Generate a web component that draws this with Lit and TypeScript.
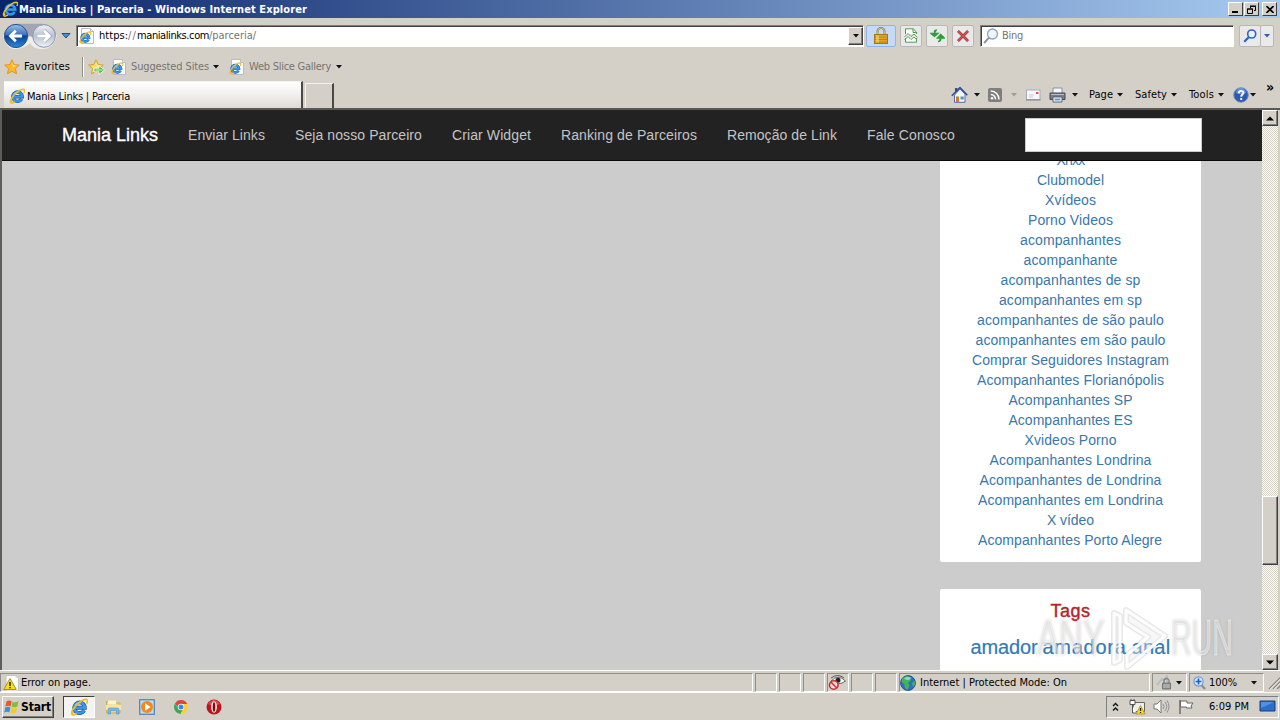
import { LitElement, html, css, svg, nothing } from "lit";
import { customElement } from "lit/decorators.js";
import { styleMap } from "lit/directives/style-map.js";

const UI = '"DejaVu Sans Condensed","DejaVu Sans",sans-serif';
const WEB = '"Liberation Sans",Arial,sans-serif';
const ctx = document.createElement("canvas").getContext("2d")!;

// Tracks a label so that it fills exactly the given width.
function label(text: string, width: number, cls = "ui", font = `11px ${UI}`) {
  ctx.font = font;
  const spacing = (width - ctx.measureText(text).width) / text.length;
  return html`<span class="t ${cls}" style=${styleMap({ width: width + "px", letterSpacing: spacing.toFixed(3) + "px" })}>${text}</span>`;
}
const web = (text: string, width: number, cls = "link", px = 14) => label(text, width, cls, `${px}px ${WEB}`);
const gap = (w: number) => html`<i class="gap" style=${styleMap({ width: w + "px" })}></i>`;
const icon = (w: number, h: number, body: unknown, cls = "") =>
  html`<svg class="ic ${cls}" width=${w} height=${h} viewBox="0 0 ${w} ${h}">${body}</svg>`;
const caret = (cls = "") => icon(6, 4, svg`<path d="M0 0h6L3 3.6z" fill=${cls ? "#a09d98" : "#111"}/>`);

const eGlyph = svg`
  <path d="M12.600 11A4.700 4.700 0 1 1 13.200 8.700H5" fill="none" stroke="#1553a4" stroke-width="3.400"/>
  <path d="M12.600 11A4.700 4.700 0 1 1 13.200 8.700H5" fill="none" stroke="#3b97e8" stroke-width="2.300"/>
  <path d="M4.600 6.500Q6.500 3.800 9.500 4" stroke="#a6e0fb" fill="none" stroke-width="1"/>
  <path d="M3.200 12.500C.8 15.500 2.500 16 6 13.800M2 14.800C-.5 12.500 8.500 1.600 14 1.200c2.200 0 1.700 2.200.9 3.800" stroke="#f2be25" stroke-width="1.500" fill="none"/>`;
const ie = () => icon(16, 16, eGlyph);
const ieBig = () => icon(18, 18, svg`<g transform="scale(1.120)">${eGlyph}</g>`);
const iePage = () => icon(16, 16, svg`<path d="M2.500 .5h9l3 3v12h-12z" fill="#fff" stroke="#b5bcc8"/><path d="M11.500.5v3h3" fill="#dde4ee" stroke="#b5bcc8"/><g transform="translate(-.3 3) scale(.78)">${eGlyph}</g>`);
const starPath = "M8 .8l2.200 4.700 5.100.6-3.800 3.500 1 5.200L8 12.300l-4.500 2.500 1-5.200L.7 6.100l5.100-.6z";
const star = (add = false) => icon(17, 16, svg`
  <path d=${starPath} fill=${add ? "#fbdc66" : "#fbb92a"} stroke=${add ? "#cf9a22" : "#e0921c"} stroke-width=".9"/>
  <path d="M8 2.800 9.300 6.200 12.500 6.800 9 8z" fill="#fff0a8"/>
  ${add ? svg`<path d="M6 9.200h5V6.500l5.500 4.500-5.500 4.500v-2.700H6z" fill="#4cc043" stroke="#fff" stroke-width=".8"/><path d="M7.500 11h7" stroke="#d8f5cc"/>` : nothing}`);

const back = icon(60, 26, svg`
  <defs>
    <linearGradient id="b" x1="0" y1="0" x2="0" y2="1"><stop offset="0" stop-color="#9cbfe8"/><stop offset=".45" stop-color="#3a72be"/><stop offset=".5" stop-color="#0c3f92"/><stop offset="1" stop-color="#2c8cdf"/></linearGradient>
    <linearGradient id="f" x1="0" y1="0" x2="0" y2="1"><stop offset="0" stop-color="#eef1f6"/><stop offset=".5" stop-color="#b9c2d2"/><stop offset="1" stop-color="#eef2f8"/></linearGradient>
  </defs>
  <path d="M2 12Q5 27 15 26T29 20Q33 27 43 26T56 12z" fill="#efeeec"/>
  <path d="M6 4Q12 0 18 .8H41Q55 2 55 13L43 20 29 13 15 20z" fill="#a3a5b4"/>
  <circle cx="15" cy="13" r="11.600" fill="url(#b)" stroke="#2a4f8c"/>
  <path d="M21 13H10M14.800 7.700 9.500 13l5.300 5.300" stroke="#fff" stroke-width="2.800" fill="none"/>
  <circle cx="43" cy="13" r="11.300" fill="url(#f)" stroke="#8e99ad"/>
  <path d="M36.500 13h11M43 7.700l5.300 5.300-5.300 5.300" stroke="#97a2b5" stroke-width="4" fill="none"/>
  <path d="M36.500 13h11M43 7.700l5.300 5.300-5.300 5.300" stroke="#fff" stroke-width="2.800" fill="none"/>`);

const lock = icon(14, 17, svg`<path d="M3.500 9V4.500a3.500 3.500 0 0 1 7 0V9" fill="none" stroke="#8c7a3c" stroke-width="2"/><path d="M3.500 8V4.500a3.500 3.500 0 0 1 7 0V8" fill="none" stroke="#e5d9a8" stroke-width=".7"/><rect x=".5" y="7.500" width="13" height="9" fill="#e2a720" stroke="#a87512"/><path d="M1 10h12M1 12.500h12M1 15h12" stroke="#b9851a"/><path d="M2 8.500h3v7H2z" fill="#fbd977" opacity=".6"/>`);
const compat = icon(14, 15, svg`<path d="M1.500 6V.8h7.700l3.300 3.300V6M1.500 10v4.200h11V10" fill="#fff" stroke="#4d9a4d"/><path d="M9 1v3.500h3.500" fill="none" stroke="#4d9a4d"/><path d="M.5 9 4 5.500l3 3 3-2.500 3.500 3.500M.5 12 4 8.500l3 3 3-2.500 3 3" stroke="#54a654" fill="none"/>`);
const refresh = icon(15, 14, svg`<path d="M4.500 7.500 1 4.500h7zM4.500 5V2Q5 1 7 1.200" fill="#2e9c38" stroke="#2e9c38" stroke-width="1.300"/><path d="M10.700 5.500 7.300 9h7zM10.700 8v3Q10 12.800 8 12.700" fill="#2e9c38" stroke="#2e9c38" stroke-width="1.300"/>`);
const stop = icon(12, 12, svg`<path d="M1 1l10 10M11 1 1 11" stroke="#8c3434" stroke-width="2.600"/><path d="M1 1l10 10M11 1 1 11" stroke="#e04c4c" stroke-width="1.600"/>`);
const mag = (c: string) => icon(14, 14, svg`<circle cx="8.700" cy="5" r="4" fill="#e9f2fc" stroke=${c} stroke-width="1.600"/><path d="M5.700 8.200 1.200 12.800" stroke=${c} stroke-width="2.200"/>`);
const magBig = icon(16, 16, svg`<circle cx="9.500" cy="6" r="5" fill="#eef5fc" stroke="#8fa3bd" stroke-width="1.300"/><path d="M6 9.700 1.200 15" stroke="#8d949e" stroke-width="2"/>`);

const home = icon(17, 17, svg`<path d="M4 2h2.500v4H4z" fill="#3350a0"/><path d="M3.500 9v7.300h10.500V8L9 3z" fill="#f4f6fb" stroke="#556ca0"/><path d="M.8 9.700 9 1.500l7.300 7.700" fill="none" stroke="#2d4d95" stroke-width="1.500"/><path d="M5 10.500h3v5.500H5z" fill="#c7822d"/><path d="M9.500 10.500h3.200v3H9.500z" fill="#4797d8"/>`);
const rss = icon(14, 14, svg`<rect width="14" height="14" rx="2" fill="#7e7e7e"/><circle cx="4" cy="10.300" r="1.300" fill="#fff"/><path d="M2.800 6.500a4.700 4.700 0 0 1 4.700 4.900M2.800 3a8.300 8.300 0 0 1 8.200 8.400" fill="none" stroke="#fff" stroke-width="1.500"/>`);
const mail = icon(15, 12, svg`<rect x=".5" y="1" width="13.500" height="9.500" fill="#f7f8fb" stroke="#a9acb5"/><path d="M0 11h14.500" stroke="#7e828b"/><path d="M10 3h2.500v2H10z" fill="#d05a55"/><path d="M3 6h5M3 8h4" stroke="#c9ccd6"/>`);
const printer = icon(17, 16, svg`<path d="M4 1h9v6H4z" fill="#f5f8fc" stroke="#8a9099"/><path d="M1 6h15v6.500H1z" fill="#777d87" stroke="#444a54"/><path d="M2 7.500h13" stroke="#b8bec8"/><path d="M4 10h9v5H4z" fill="#fff" stroke="#59606b"/><path d="M5.500 11.500h6v2h-6z" fill="#5f99d0"/>`);
const help = icon(16, 16, svg`<circle cx="8" cy="8" r="7.300" fill="#2b59b4" stroke="#7c93bd"/><path d="M3 6a5 5 0 0 1 10 0q-5 2.500-10 0z" fill="#80a8e4" opacity=".7"/><path d="M5.800 6.200C5.800 3 10.600 3.300 10.400 6 10.300 7.600 8.200 7.500 8.200 9.700M8.200 11v2" fill="none" stroke="#fff" stroke-width="1.900"/>`);

const warn = icon(16, 16, svg`<path d="M3 .5h9l3.500 3V16H3z" fill="#fff" stroke="#c3c3c3"/><path d="M7 3.500 13.300 14.500H.7z" fill="#f8dd1c" stroke="#a8901a"/><path d="M7 7v4M7 12v1.300" stroke="#222" stroke-width="1.500"/>`);
const eye = icon(20, 17, svg`<path d="M3 7Q10-.5 17.500 7 10.500 12.500 3 7z" fill="#fff" stroke="#666"/><path d="M3 4Q10-1 16 4" stroke="#555" fill="none"/><circle cx="10" cy="6.300" r="2.500" fill="#222"/><circle cx="5.800" cy="11" r="4.300" fill="#f6dcdc" stroke="#c43434" stroke-width="1.600"/><path d="M2.800 8l6 6" stroke="#c43434" stroke-width="1.600"/>`);
const globe = icon(16, 16, svg`<circle cx="8" cy="8" r="7.400" fill="#2a71c4" stroke="#27508e"/><path d="M2 4Q5 0 9 1.500L11 5 8 8 9.500 10 7.500 15Q4 13 4.500 9L1.500 7zM12 8l3-2q.5 4-2 6z" fill="#43b653"/><path d="M4 3.500Q8 1 11.500 3 8 6.500 4 3.500z" fill="#bfe8f4" opacity=".7"/>`);
const privacy = icon(16, 15, svg`<path d="M1 10 6 4l2 2 3-5v6" stroke="#b9bbbf" stroke-width="2" fill="#d9dade"/><path d="M8 8V6a2.500 2.500 0 0 1 5 0v2" fill="none" stroke="#858585" stroke-width="1.400"/><path d="M6.500 8h8v6h-8z" fill="#8f8f8f" stroke="#757575"/><path d="M7 10h7M7 12h7" stroke="#c5c5c5"/>`);
const zoomIc = icon(13, 14, svg`<path d="M8 8.500l4 4.500" stroke="#8a8f98" stroke-width="2.200"/><circle cx="5.500" cy="5.500" r="4.600" fill="#dcebfb" stroke="#6f9bd2" stroke-width="1.200"/><path d="M5.500 2.500v6M2.500 5.500h6" stroke="#1d62c0" stroke-width="1.700"/>`);
const grip = icon(13, 13, svg`<path d="M1 13 13 1M5 13l8-8M9 13l4-4" stroke="#86837d" stroke-width="1.400"/><path d="M2.300 13 13 2.300M6.300 13 13 6.300" stroke="#fff" stroke-width=".8"/>`);

const flag = icon(16, 16, svg`<path d="M2.500 2.500Q5 .8 7.600 2.300L6.600 7.400Q4 6 1.400 7.500z" fill="#e8582a"/><path d="M8.600 2.700Q11 4 14.500 2.300L13.400 7.400Q10.500 9 7.600 7.800z" fill="#7fbe3e"/><path d="M1.200 8.500Q4 7 6.400 8.400L5.300 13.500Q3 12 .2 13.500z" fill="#3f8fdc"/><path d="M7.400 8.800Q10 10.200 13.200 8.500L12.100 13.500Q9 15 6.300 13.900z" fill="#f8c832"/>`);
const folder = icon(17, 16, svg`<path d="M1.500 2.500h5l1.500 1.500h7v10h-13.500z" fill="#f0d477" stroke="#d2b048"/><path d="M3 1.500h8v4H3z" fill="#fbf3cc"/><path d="M1 6h15v5H1z" fill="#fae79a"/><path d="M3 15V10.500q0-1.500 1.500-1.500h8q1.500 0 1.500 1.500V15h-2.500v-3.500h-6V15z" fill="#74b9ea" stroke="#4a92cf" stroke-width=".6"/>`);
const player = icon(16, 16, svg`<rect x=".7" y=".7" width="14.600" height="14.600" fill="#b9dcf4" stroke="#4c82bb" stroke-width="1.200"/><circle cx="8" cy="8" r="6" fill="#f18a1c"/><path d="M6 4.300 11.500 8 6 11.700z" fill="#fff"/>`);
const chrome = icon(14, 14, svg`<path d="M1 3.500A7 7 0 0 1 13.300 4H7a3 3 0 0 0-3 3z" fill="#df4635"/><path d="M1 3.500A7 7 0 0 0 6.500 14L9.500 8.500 4.400 8.500z" fill="#3da658"/><path d="M13.300 4A7 7 0 0 1 6.500 14L9.700 8.500V4z" fill="#fbcf35"/><circle cx="7" cy="7" r="3.200" fill="#fff"/><circle cx="7" cy="7" r="2.500" fill="#4384ec"/>`);
const opera = icon(16, 16, svg`<circle cx="8" cy="8" r="7.500" fill="#b7171d"/><path d="M2 5Q8-3 14 5 8 8 2 5z" fill="#e36464" opacity=".7"/><ellipse cx="8" cy="8" rx="2.900" ry="5.800" fill="#f7eaea"/><ellipse cx="8" cy="8" rx="1.300" ry="4.800" fill="#7c0a10"/>`);
const chev = icon(7, 10, svg`<path d="M1 4l2.500-2.500L6 4M1 8.500 3.500 6 6 8.500" fill="none" stroke="#111" stroke-width="1.400"/>`);
const net = icon(17, 16, svg`<path d="M4.500 3.500h11v9h-11z" fill="#eee" stroke="#666"/><path d="M1 1.500h5v4H1zM2 0v2M5 0v2M3.500 6v8h4" fill="#fff" stroke="#555"/><path d="M11.500 6.500 16 15H7z" fill="#f8dd1c" stroke="#a8901a" stroke-width=".8"/><path d="M11.500 9v3M11.500 13v1" stroke="#222" stroke-width="1.300"/>`);
const sound = icon(17, 15, svg`<path d="M1 5h3l4-4v13l-4-4H1z" fill="#fff" stroke="#777"/><path d="M10 5q2 2.500 0 5M12 3q3.500 4.500 0 9M14 1.500q4 6 0 12" fill="none" stroke="#8f8f8f"/>`);
const action = icon(16, 15, svg`<path d="M2 1v14" stroke="#666" stroke-width="1.400"/><path d="M2.500 2h6.500v2h6l-2 3 1 2H8.500V8h-6z" fill="#fff" stroke="#666"/>`);
const monitor = icon(17, 14, svg`<path d="M1 1h15v10H1z" fill="#2c6fc8" stroke="#173c7c"/><path d="M2 2h13L2 8z" fill="#6fa8e8" opacity=".6"/><path d="M4 13h9" stroke="#cfd3da" stroke-width="1.500"/>`);

const links: [string, number][] = [
  ["Xnxx", 28], ["Clubmodel", 67], ["Xvídeos", 51], ["Porno Videos", 85], ["acompanhantes", 101], ["acompanhante", 94],
  ["acompanhantes de sp", 140], ["acompanhantes em sp", 143], ["acompanhantes de são paulo", 187],
  ["acompanhantes em são paulo", 190], ["Comprar Seguidores Instagram", 197], ["Acompanhantes Florianópolis", 187],
  ["Acompanhantes SP", 124], ["Acompanhantes ES", 124], ["Xvideos Porno", 92], ["Acompanhantes Londrina", 162],
  ["Acompanhantes de Londrina", 182], ["Acompanhantes em Londrina", 185], ["X vídeo", 47], ["Acompanhantes Porto Alegre", 185],
];
const nav: [string, number][] = [
  ["Enviar Links", 77], ["Seja nosso Parceiro", 127], ["Criar Widget", 79], ["Ranking de Parceiros", 136], ["Remoção de Link", 110], ["Fale Conosco", 88],
];

@customElement("app-root")
export class AppRoot extends LitElement {
  static styles = css`
    :host { display: flex; flex-direction: column; width: 1280px; height: 720px; overflow: hidden; background: #d4d0c8; font: 11px "DejaVu Sans Condensed", "DejaVu Sans", sans-serif; color: #000; }
    * { box-sizing: border-box; }
    .row { display: flex; align-items: center; flex: none; }
    .gap, .ic { flex: none; display: block; }
    .t { white-space: pre; flex: none; display: block; }
    .grey { color: #77746f; }
    .title { height: 18px; padding-left: 2px; background: linear-gradient(90deg, #0a246a, #a6caf0); }
    .cap { font-weight: bold; color: #fff; }
    .winbtn { width: 15px; height: 14px; flex: none; background: #d4d0c8; border: 1px solid; border-color: #fff #404040 #404040 #fff; display: flex; align-items: center; justify-content: center; }
    .address { height: 36px; padding: 0 0 1px 1px; }
    .field { height: 22px; background: #fff; border: 1px solid; border-color: #808080 #fff #fff #808080; box-shadow: inset 1px 1px #404040; display: flex; align-items: center; flex: none; }
    .url { width: 788px; padding-left: 2px; }
    .drop { width: 15px; height: 18px; margin: 1px 0 0 0; background: #d4d0c8; border: 1px solid; border-color: #fff #404040 #404040 #fff; box-shadow: inset -1px -1px #808080; display: flex; align-items: center; justify-content: center; flex: none; }
    .btn { width: 22px; height: 22px; flex: none; border: 1px solid #b9b7b8; border-radius: 2px; background: #e9e9ea; display: flex; align-items: center; justify-content: center; }
    .secure { width: 30px; background: #c4daf8; border-color: #93b4e3; }
    .narrow { width: 14px; margin-left: -1px; }
    .search { width: 254px; padding-left: 2px; }
    .favs { height: 25px; padding-left: 4px; }
    .sep { width: 2px; height: 20px; background: linear-gradient(90deg, #8f8c86 50%, #fff 50%); flex: none; }
    .tabs { height: 29px; padding-left: 4px; align-items: flex-end; }
    .tab { width: 299px; height: 27px; padding: 2px 0 0 5px; display: flex; align-items: center; background: linear-gradient(#fff, #f2f1ef 45%, #dedbd6); border-right: 2px solid #4a4844; border-top: 1px solid #f4f3f1; flex: none; }
    .newtab { width: 29px; height: 25px; margin-left: 2px; border: 1px solid #f4f3f1; border-right: 2px solid #4a4844; border-bottom: 0; flex: none; }
    .tools { display: flex; align-items: center; height: 27px; }
    .more { font-weight: bold; font-size: 14px; align-self: flex-start; line-height: 12px; }
    .view { display: flex; flex: none; height: 562px; border-top: 2px solid #5a5854; border-left: 2px solid #5f5d59; position: relative; }
    .page { width: 1260px; background: #ccc; display: flex; flex-direction: column; overflow: hidden; font-family: "Liberation Sans", Arial, sans-serif; font-size: 14px; }
    .nav { height: 51px; background: #222; border-bottom: 1px solid #080808; padding-left: 60px; flex: none; display: flex; align-items: center; gap: 30px; position: relative; z-index: 1; }
    .brand { font-size: 18px; color: #fff; -webkit-text-stroke: .35px #fff; }
    .navlink { color: #c4c4c4; }
    .q { width: 177px; height: 34px; background: #fff; border: 1px solid #ccc; margin-left: 40px; }
    .side { width: 261px; margin-left: 938px; display: flex; flex-direction: column; gap: 27px; }
    .card { background: #fff; display: flex; flex-direction: column; align-items: center; border-radius: 2px; }
    .first { margin-top: -11px; padding-bottom: 12px; }
    .link { color: #3a77ab; line-height: 20px; height: 20px; }
    .tagsbox { height: 90px; padding-top: 11px; }
    .tagh { font-size: 18px; font-weight: normal; color: #b8202a; line-height: 22px; -webkit-text-stroke: .4px #b8202a; }
    .tags { display: flex; gap: 5px; margin-top: 12px; align-items: baseline; }
    .tag { color: #337ab7; font-size: 20px; line-height: 26px; -webkit-text-stroke: .2px #337ab7; }
    .bar { width: 16px; display: flex; flex-direction: column; background: repeating-conic-gradient(#fff 0 25%, #d4d0c8 0 50%) 0 0 / 2px 2px; flex: none; }
    .sb { width: 16px; height: 16px; background: #d4d0c8; border: 1px solid; border-color: #fff #404040 #404040 #fff; box-shadow: inset -1px -1px #808080; display: flex; align-items: center; justify-content: center; }
    .thumb { height: 69px; margin: 370px 0 89px; }
    .mark { position: absolute; left: 1035px; top: 496px; z-index: 2; display: flex; align-items: center; width: 200px; height: 64px; font-family: "Liberation Sans", Arial, sans-serif; pointer-events: none; }
    .wm { color: rgba(255, 255, 255, .5); -webkit-text-stroke: 1px rgba(255, 255, 255, .5); font-size: 50px; line-height: 58px; transform-origin: 0 50%; text-shadow: 0 0 3px rgba(90, 90, 90, .38); white-space: pre; }
    .any { width: 70px; transform: scaleX(.66); }
    .run { width: 64px; transform: scaleX(.57); }
    .status { height: 22px; border-top: 1px solid #fff; align-items: center; padding-top: 2px; }
    .pane { width: 22px; height: 19px; border: 1px solid; border-color: #908d87 #fff #fff #908d87; display: flex; align-items: center; flex: none; margin-right: 2px; }
    .message { width: 753px; }
    .zone { width: 251px; }
    .priv { width: 35px; }
    .zoom { width: 75px; }
    .task { height: 27px; border-top: 1px solid #fff; padding: 1px 1px 0 2px; }
    .start { width: 52px; height: 22px; background: #d4d0c8; border: 1px solid; border-color: #fff #404040 #404040 #fff; box-shadow: inset -1px -1px #808080; display: flex; align-items: center; padding-left: 1px; flex: none; }
    .bold { font-weight: bold; font-size: 12px; }
    .active { width: 32px; height: 22px; background: #f4f3f1; border: 1px solid; border-color: #404040 #fff #fff #404040; display: flex; align-items: center; justify-content: center; flex: none; }
    .tray { width: 173px; height: 22px; border: 1px solid; border-color: #808080 #fff #fff #808080; display: flex; align-items: center; padding-left: 5px; flex: none; }
  `;

  render() {
    const bold = (s: number) => `bold ${s}px ${UI}`;
    return html`
      <div class="row title">${ie()}${gap(1)}${label("Mania Links | Parceria - Windows Internet Explorer", 288, "cap", bold(11))}${gap(921)}
        <div class="winbtn">${icon(8, 8, svg`<path d="M0 6h6v2H0z"/>`)}</div>${gap(1)}
        <div class="winbtn">${icon(9, 9, svg`<path d="M3.500 3V1.500h5v4H7M3 1h6" fill="none" stroke="#000"/><path d="M.5 4h5v4.500h-5zM0 4h6" fill="none" stroke="#000"/>`)}</div>${gap(3)}
        <div class="winbtn">${icon(8, 7, svg`<path d="M.5 0l7 7M7.500 0l-7 7" stroke="#000" stroke-width="1.600"/>`)}</div>
      </div>
      <div class="row address">${back}${icon(10, 6, svg`<path d="M1 .5h8L5 5z" fill="#4d90d0" stroke="#1f4f8c"/>`)}${gap(5)}
        <div class="field url">${iePage()}${gap(4)}${label("https:", 29)}${label("//", 9, "grey")}${label("manialinks.com", 72)}${label("/parceria/", 47, "grey")}${gap(592)}<div class="drop">${caret()}</div></div>
        ${gap(2)}<div class="btn secure">${lock}</div>${gap(4)}<div class="btn">${compat}</div>${gap(4)}<div class="btn">${refresh}</div>${gap(4)}<div class="btn">${stop}</div>${gap(6)}
        <div class="field search">${magBig}${gap(3)}${label("Bing", 21, "grey")}</div>${gap(5)}
        <div class="btn">${mag("#2a62c4")}</div><div class="btn narrow">${icon(6, 4, svg`<path d="M0 0h6L3 3.600z" fill="#2f62ae"/>`)}</div>
      </div>
      <div class="row favs">${star()}${gap(3)}${label("Favorites", 46)}${gap(12)}<i class="sep"></i>${gap(4)}${star(true)}${gap(6)}${iePage()}${gap(4)}${label("Suggested Sites", 78, "grey")}${gap(4)}${caret()}${gap(10)}${iePage()}${gap(4)}${label("Web Slice Gallery", 82, "grey")}${gap(5)}${caret()}</div>
      <div class="row tabs">
        <div class="tab">${ie()}${gap(2)}${label("Mania Links | Parceria", 103)}</div><div class="newtab"></div>${gap(617)}
        <div class="tools">${home}${gap(6)}${caret()}${gap(8)}${rss}${gap(9)}${caret("off")}${gap(9)}${mail}${gap(8)}${printer}${gap(6)}${caret()}${gap(11)}${label("Page", 24)}${gap(4)}${caret()}${gap(12)}${label("Safety", 32)}${gap(4)}${caret()}${gap(12)}${label("Tools", 25)}${gap(4)}${caret()}${gap(9)}${help}${gap(1)}${caret()}${gap(10)}${label("»", 10, "more", bold(14))}</div>
      </div>
      <div class="view">
        <div class="page">
          <div class="nav">${web("Mania Links", 96, "brand", 18)}${nav.map(([s, w]) => web(s, w, "navlink"))}<div class="q"></div></div>
          <div class="side">
            <div class="card first">${links.map(([s, w]) => web(s, w))}</div>
            <div class="card tagsbox">${web("Tags", 40, "tagh", 18)}
              <div class="tags">${web("amador", 67, "tag", 20)}${web("amadora", 84, "tag", 20)}${web("anal", 39, "tag", 20)}</div></div>
          </div>
        </div>
        <div class="bar"><div class="sb">${icon(8, 5, svg`<path d="M0 4.500h8L4 .5z"/>`)}</div><div class="sb thumb"></div><div class="sb">${icon(8, 5, svg`<path d="M0 .5h8L4 4.500z"/>`)}</div></div>
        <div class="mark"><span class="wm any">ANY</span>
          ${icon(64, 64, svg`<g fill="none" stroke="rgba(110,110,110,.16)" stroke-width="6" stroke-linejoin="round"><path d="M7 7v50l6-3V10z"/><path d="M19 4 58 30 20 61V49l21-18-22-14z"/></g><g fill="rgba(235,235,235,.4)" stroke="rgba(255,255,255,.9)" stroke-width="3" stroke-linejoin="round"><path d="M7 7v50l6-3V10z"/><path d="M19 4 58 30 20 61V49l21-18-22-14z"/></g>`)}
          <span class="wm run">RUN</span></div>
      </div>
      <div class="row status">
        <div class="pane message">${gap(2)}${warn}${gap(2)}${label("Error on page.", 70)}</div>
        ${[0, 1, 2].map(() => html`<div class="pane"></div>`)}<div class="pane">${eye}</div>
        ${[0, 1].map(() => html`<div class="pane"></div>`)}
        <div class="pane zone">${globe}${gap(4)}${label("Internet | Protected Mode: On", 147)}</div>
        <div class="pane priv">${gap(3)}${privacy}${gap(4)}${caret()}</div>
        <div class="pane zoom">${gap(3)}${zoomIc}${gap(3)}${label("100%", 28)}${gap(14)}${caret()}</div>${gap(2)}${grip}
      </div>
      <div class="row task">
        <div class="start">${flag}${gap(1)}${label("Start", 30, "bold", bold(12))}</div>${gap(9)}
        <div class="active">${ieBig()}</div>${gap(10)}${folder}${gap(17)}${player}${gap(19)}${chrome}${gap(18)}${opera}${gap(884)}
        <div class="tray">${chev}${gap(10)}${net}${gap(7)}${sound}${gap(8)}${action}${gap(15)}${label("6:09 PM", 40)}${gap(10)}${monitor}</div>
      </div>`;
  }
}
